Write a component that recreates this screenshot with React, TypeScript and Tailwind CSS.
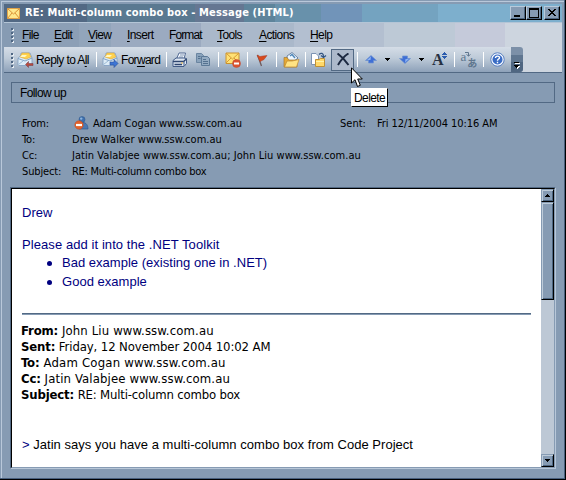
import React from "react";

const Sep = () => <span className="h-[15px] w-px shrink-0 bg-white" />;

const Grip = () => (
  <div className="flex w-[3px] shrink-0 flex-col gap-[2px]">
    {[0, 1, 2, 3].map((i) => (
      <span key={i} className="h-[2px] w-[2px] bg-[#4f6784] shadow-[1px_1px_0_#e8eef4]" />
    ))}
  </div>
);

const Mail = ({ arrow }: { arrow: "reply" | "forward" }) => (
  <svg width="17" height="16" viewBox="0 0 17 16" className="shrink-0">
    <path d="M1 6.500L4 3V1H13L15 6V12L13 13.500H2L1 12.500Z" fill="#dcebf6" stroke="#7d9cc0" strokeWidth=".8" />
    <path d="M5 1H12L14 5L9 7L3 5Z" fill="#ffd24d" stroke="#d9a43e" strokeWidth=".6" />
    <path d="M5 3H10L8 5H3Z" fill="#fff7c4" />
    <path d="M1 6.500L8 9L15 6" stroke="#6c93bd" fill="none" strokeWidth=".8" />
    <path d="M1.500 12.500L6 9" stroke="#8badcc" fill="none" strokeWidth=".8" />
    {arrow === "reply" ? (
      <path d="M8.500 12.500L11.500 9.500V11.500H16V13.500H11.500V15.500Z" fill="#b94b3c" stroke="#7d4450" strokeWidth=".6" />
    ) : (
      <path d="M16 11.500L12 7.500V10H8V13H12V15.500Z" fill="#3d75d4" stroke="#2b4f94" strokeWidth=".6" />
    )}
  </svg>
);

const Printer = () => (
  <svg width="16" height="16" viewBox="0 0 16 16">
    <path d="M4.500 7L7 1H13.500L12 7Z" fill="#f6faff" stroke="#536b93" />
    <path d="M8 3H12M7 5H11" stroke="#8097b4" />
    <path d="M1 8.500L4 6H12L14.500 6.500V11.500L12 14.500H1Z" fill="#dce6f2" stroke="#435c88" />
    <path d="M1 9.500H11.500L14.500 7" stroke="#2f466f" strokeWidth="1.300" fill="none" />
    <path d="M2.500 12.500H10" stroke="#2f466f" strokeWidth="1.300" />
    <path d="M12 9V14" stroke="#435c88" />
    <path d="M9 11H11" stroke="#f2bb49" />
  </svg>
);

const Copy = () => (
  <svg width="16" height="16" viewBox="0 0 16 16">
    <path d="M1.500 1.500H6.500L8.500 3.500V10.500H1.500Z" fill="#8aa3bc" stroke="#6a85a1" />
    <path d="M6.500 4.500H12.500L14.500 6.500V13.500H6.500Z" fill="#94abc2" stroke="#5c7997" />
    <path d="M3 4.500H5.500M3 6.500H5.500M8 7.500H11M8 9.500H13M8 11.500H13" stroke="#54718f" />
  </svg>
);

const Block = () => (
  <svg width="16" height="16" viewBox="0 0 16 16">
    <path d="M1 1H14V11.500H1Z" fill="#ffe174" stroke="#cc922d" />
    <path d="M1 1L7.500 7L14 1M1 11L6 6M14 11L9 6" fill="none" stroke="#d69b35" />
    <circle cx="11.500" cy="11.500" r="4" fill="#dc5430" stroke="#b84a35" strokeWidth=".5" />
    <path d="M9 11.500H14" stroke="#fff" strokeWidth="2" />
  </svg>
);

const Flag = () => (
  <svg width="13" height="14" viewBox="0 0 13 14">
    <path d="M1.500 2L5.500 13" stroke="#6f5a5c" strokeWidth="1.300" />
    <path d="M1 2L4 3.500L7 3L11 2.500L8 6.500L4 8.500Z" fill="#d84a1d" stroke="#a83c28" strokeWidth=".5" />
  </svg>
);

const Folder = () => (
  <svg width="17" height="16" viewBox="0 0 17 16">
    <path d="M4 4L9 0.500L15 6L10 10H5Z" fill="#eef7ff" stroke="#536d91" strokeWidth=".8" />
    <path d="M7 4L9 2.500L12 6" stroke="#4d86b8" fill="none" strokeWidth="1.400" />
    <path d="M1 5.500H4L6 8H14V15H1Z" fill="#e6aa35" stroke="#a77a32" strokeWidth=".7" />
    <path d="M1.500 15L4 9H9L16 7.500L13.500 15Z" fill="#ffe383" stroke="#bd8830" strokeWidth=".7" />
  </svg>
);

const Move = () => (
  <svg width="17" height="16" viewBox="0 0 17 16">
    <path d="M1.500 1.500H6L8.500 4V12.500H1.500Z" fill="#fff" stroke="#7d94b3" />
    <path d="M5.500 7.500H9L10.500 6.500H14.500V14.500H5.500Z" fill="#ffd868" stroke="#bd9037" />
    <path d="M6 9.500H14" stroke="#fff3a7" />
    <path d="M9 2.500C11 .5 13.500 1 13.500 4.500M11 3.500L13.500 5.500L16 3.500" fill="none" stroke="#315482" strokeWidth="1.200" />
  </svg>
);

const Cross = () => (
  <svg width="14" height="13" viewBox="0 0 14 13">
    <path d="M1.500 .5C5 3 9 7 12.500 12M12.500 .5C8 3 5 7 2 12" fill="none" stroke="#1d2941" strokeWidth="2" />
  </svg>
);

const Arrow = ({ down = false }: { down?: boolean }) => (
  <svg width="12" height="9" viewBox="0 0 12 9" className={down ? "rotate-180" : ""}>
    <path d="M6 .5L11.500 5.500H8.500V8H3.500V5.500H.5Z" fill="#3f6fd6" stroke="#6f93d0" strokeWidth=".7" />
    <path d="M6 1.500L2 5H5.500Z" fill="#8db3f2" />
  </svg>
);

const Drop = () => (
  <svg width="5" height="3" viewBox="0 0 5 3" shapeRendering="crispEdges">
    <path d="M0 0H5V1H4V2H3V3H2V2H1V1H0Z" />
  </svg>
);

const FontSize = () => (
  <span className="flex h-[15px] w-[16px] items-end">
    <span className="font-['Liberation_Serif',serif] text-[16px] leading-[14px] font-bold text-[#273142]">A</span>
    <svg width="5" height="8" viewBox="0 0 5 8" className="-ml-[2px] shrink-0 self-start" shapeRendering="crispEdges">
      <path d="M2 0H3V1H4V2H5V3H0V2H1V1H2ZM0 4H5V5H4V6H3V7H2V6H1V5H0Z" fill="#2c5cae" />
    </svg>
  </span>
);

const Translate = () => (
  <span className="flex h-[17px] w-[17px] text-[#60778f]">
    <span className="font-['Liberation_Serif',serif] text-[13px] leading-[12px]">a</span>
    <svg width="6" height="6" viewBox="0 0 6 6" className="-ml-px shrink-0">
      <path d="M0 1.500H3.500V5M1.500 3.500L3.500 5L5.500 3.500" fill="none" stroke="#60778f" />
    </svg>
    <span className="-ml-[4px] self-end font-['Noto_Sans_CJK_JP',sans-serif] text-[10px] leading-[10px] font-bold">あ</span>
  </span>
);

const Help = () => (
  <svg width="15" height="15" viewBox="0 0 15 15" className="shrink-0">
    <circle cx="7.500" cy="7.500" r="6.700" fill="#f5f9ff" stroke="#4a74bc" strokeWidth=".9" />
    <circle cx="7.500" cy="7.500" r="5" fill="#3a6cc4" />
    <path d="M5.500 6C5.500 3.500 9.500 3.500 9.500 5.700C9.500 7 7.500 7 7.500 8.700M7.500 9.800V11.300" fill="none" stroke="#fff" strokeWidth="1.400" />
  </svg>
);

const Person = () => (
  <svg width="15" height="14" viewBox="0 0 15 14" className="-mt-[2px] shrink-0">
    <path d="M4 12C4 8 6 6.500 9 6.500C12 6.500 14 9 14 13H5Z" fill="#4a78b2" stroke="#2c5489" strokeWidth=".6" />
    <circle cx="8" cy="3.500" r="3" fill="#3f70ad" stroke="#2c5489" strokeWidth=".5" />
    <circle cx="7.200" cy="2.600" r="1.200" fill="#8db4dc" />
    <circle cx="5" cy="9" r="4.200" fill="#e4632c" stroke="#c04a22" strokeWidth=".5" />
    <path d="M2 9H8" stroke="#fff" strokeWidth="2.200" />
  </svg>
);

const WinButton = ({ d }: { d: string }) => (
  <span className="flex h-[14px] w-[16px] items-center justify-center border border-t-[#b8cadb] border-r-black border-b-black border-l-[#b8cadb] bg-[#869bb3] shadow-[inset_-1px_-1px_0_#4c6581]">
    <svg width="10" height="10" viewBox="0 0 10 10" shapeRendering="crispEdges">
      <path d={d} fillRule="evenodd" />
    </svg>
  </span>
);

const ScrollButton = ({ down = false }: { down?: boolean }) => (
  <span className="flex h-[13px] w-[13px] shrink-0 items-center justify-center border border-t-[#869bb3] border-r-black border-b-black border-l-[#869bb3] bg-[#869bb3] shadow-[inset_1px_1px_0_#bdcbd9,inset_-1px_-1px_0_#4c6581]">
    <svg width="5" height="3" viewBox="0 0 5 3" shapeRendering="crispEdges" className={down ? "" : "rotate-180"}>
      <path d="M0 0H5V1H4V2H3V3H2V2H1V1H0Z" />
    </svg>
  </span>
);

const menu = [
  { pre: "", k: "F", rest: "ile", w: "w-[32px]" },
  { pre: "", k: "E", rest: "dit", w: "w-[34px]" },
  { pre: "", k: "V", rest: "iew", w: "w-[39px]" },
  { pre: "", k: "I", rest: "nsert", w: "w-[42px]" },
  { pre: "F", k: "o", rest: "rmat", w: "w-[48px] tracking-[-0.9px]" },
  { pre: "", k: "T", rest: "ools", w: "w-[42px]" },
  { pre: "", k: "A", rest: "ctions", w: "w-[51px]" },
  { pre: "", k: "H", rest: "elp", w: "w-[30px]" },
];

const headers = [
  { label: "From:", value: "Adam Cogan www.ssw.com.au", sent: "Fri 12/11/2004 10:16 AM", t: "tracking-[-0.04px]" },
  { label: "To:", value: "Drew Walker www.ssw.com.au", t: "tracking-[0.04px]" },
  { label: "Cc:", value: "Jatin Valabjee www.ssw.com.au; John Liu www.ssw.com.au", t: "tracking-[0.05px]" },
  { label: "Subject:", value: "RE: Multi-column combo box", t: "tracking-[-0.27px]" },
];

const quoted = [
  { label: "From:", value: "John Liu www.ssw.com.au", t: "tracking-[0.13px]" },
  { label: "Sent:", value: "Friday, 12 November 2004 10:02 AM", t: "tracking-[-0.1px]" },
  { label: "To:", value: "Adam Cogan www.ssw.com.au", t: "tracking-[0.2px]" },
  { label: "Cc:", value: "Jatin Valabjee www.ssw.com.au", t: "tracking-[0.13px]" },
  { label: "Subject:", value: "RE: Multi-column combo box", t: "tracking-[-0.18px]" },
];

export default function App() {
  return (
    <div className="relative flex h-[480px] w-[566px] flex-col overflow-hidden bg-[#869bb3] px-[4px] pt-[4px] font-['Liberation_Sans',sans-serif] whitespace-nowrap text-black shadow-[inset_-1px_-1px_0_#000,inset_-2px_-2px_0_#485f7d,inset_1px_1px_0_#869bb3,inset_2px_2px_0_#b9c8da]">
      <header className="flex h-[18px] w-[558px] shrink-0 items-center bg-[linear-gradient(90deg,#526984_83px,#5a7991_83px_191px,#657792_191px_240px,#5e849b_240px_271px,#6891ab_271px_317px,#7194b9_317px_358px,#74a3c0_358px_434px,#7dafcd_434px)] pr-[2px] pl-[3px]">
        <svg width="13" height="11" viewBox="0 0 13 11">
          <path d="M.5 .5H12.500V10.500H.5Z" fill="#ffe88c" stroke="#e0a24a" />
          <path d="M.5 .5L6.500 6L12.500 .5M.5 10.500L5 5M12.500 10.500L8 5" fill="none" stroke="#d99336" />
        </svg>
        <span className="ml-[5px] font-['DejaVu_Sans_Condensed','DejaVu_Sans',sans-serif] text-[11px] leading-[16px] font-bold tracking-[0.15px] text-white">RE: Multi-column combo box - Message (HTML)</span>
        <span className="ml-auto flex">
          <WinButton d="M1 7H7V9H1Z" />
          <WinButton d="M0 0H10V10H0ZM1 2V9H9V2Z" />
          <span className="w-[2px]" />
          <WinButton d="M1 1H3V2H4V3H6V2H7V1H9V2H8V3H7V4H6V5H7V6H8V7H9V8H7V7H6V6H4V7H3V8H1V7H2V6H3V5H4V4H3V3H2V2H1Z" />
        </span>
      </header>
      <div className="flex h-[51px] w-[558px] shrink-0 flex-col border-t border-b border-t-[#b4c5d6] border-b-[#526984] bg-[linear-gradient(90deg,#869bb3_36px,#8c9fb6_36px_75px,#92a5bb_75px_107px,#9baac0_107px_197px,#aab8ca_197px_290px,#b3bfd0_290px_380px,#bdc9d6_380px_451px,#c5cada_451px_501px,#cdd5df_501px)]">
        <nav className="flex h-[24px] shrink-0 items-center pl-[7px] text-[12px] leading-[16px] tracking-[-0.6px]">
          <Grip />
          <div className="ml-[8px] flex">
            {menu.map((m) => (
              <span key={m.k} className={m.w}>
                {m.pre}<u className="underline-offset-2">{m.k}</u>{m.rest}
              </span>
            ))}
          </div>
        </nav>
        <div className="flex h-[25px] w-[519px] shrink-0 items-center overflow-hidden rounded-r-[3px] bg-[linear-gradient(#d5dde7,#bdcad8_45%,#8da1b9)]">
          <div className="flex w-[507px] items-center pl-[7px] text-[12px] leading-[16px]">
            <Grip />
            <span className="ml-[3px] flex w-[79px] shrink-0 items-center gap-[2px] tracking-[-0.6px]"><Mail arrow="reply" /><span>Reply to A<u className="underline-offset-2">l</u>l</span></span>
            <Sep />
            <span className="ml-[5px] flex w-[64px] shrink-0 items-center gap-[2px] tracking-[-0.7px]"><Mail arrow="forward" /><span>For<u className="underline-offset-2">w</u>ard</span></span>
            <Sep />
            <span className="flex w-[51px] shrink-0 items-center gap-[7px] pl-[5px]"><Printer /><Copy /></span>
            <Sep />
            <span className="flex w-[28px] shrink-0 justify-center"><Block /></span>
            <Sep />
            <span className="flex w-[28px] shrink-0 justify-center"><Flag /></span>
            <Sep />
            <span className="flex w-[28px] shrink-0 justify-center"><Folder /></span>
            <Sep />
            <span className="flex w-[25px] shrink-0 justify-center"><Move /></span>
            <span className="flex h-[22px] w-[23px] shrink-0 items-center justify-center border border-[#526984] bg-[#adb9cb]"><Cross /></span>
            <span className="w-[3px] shrink-0" />
            <Sep />
            <span className="flex shrink-0 items-center pl-[7px]">
              <Arrow /><span className="ml-[8px]"><Drop /></span>
              <span className="ml-[9px]"><Arrow down /></span><span className="ml-[8px]"><Drop /></span>
              <span className="ml-[8px]"><FontSize /></span>
            </span>
            <span className="w-[6px] shrink-0" />
            <Sep />
            <span className="flex w-[28px] shrink-0 justify-center"><Translate /></span>
            <Sep />
            <span className="ml-[6px] flex"><Help /></span>
          </div>
          <div className="flex h-full w-[12px] items-end justify-center bg-[linear-gradient(#7c90a8_8px,#5f7690_8px_15px,#4f6681_15px)] pb-[3px]">
            <svg width="6" height="7" viewBox="0 0 6 7" shapeRendering="crispEdges">
              <path d="M1 1H6V2H1ZM1 4H6V5H5V6H4V7H3V6H2V5H1Z" fill="#fff" />
              <path d="M0 0H5V1H0ZM0 3H5V4H4V5H3V6H2V5H1V4H0Z" />
            </svg>
          </div>
        </div>
      </div>
      <div className="mx-[7px] mt-[9px] flex h-[21px] shrink-0 items-center border border-[#526984] pl-[8px] text-[12px] leading-[16px] tracking-[-0.6px]">Follow up</div>
      <section className="mt-[13px] flex h-[64px] shrink-0 flex-col pl-[18px] font-['DejaVu_Sans_Condensed','DejaVu_Sans',sans-serif] text-[11px] leading-[16px]">
        {headers.map((h) => (
          <div key={h.label} className="flex h-[16px] items-center">
            <span className="w-[50px] shrink-0 tracking-[-0.15px]">{h.label}</span>
            {h.sent ? (
              <>
                <span className="flex w-[268px] shrink-0 items-center gap-[4px] pl-[2px]"><Person /><span className={h.t}>{h.value}</span></span>
                <span className="w-[37px] shrink-0">Sent:</span>
                <span className="tracking-[-0.07px]">{h.sent}</span>
              </>
            ) : (
              <span className={h.t}>{h.value}</span>
            )}
          </div>
        ))}
      </section>
      <main className="ml-[6px] mt-[7px] flex h-[282px] w-[546px] shrink-0 border border-t-[#526984] border-r-[#b8c7d8] border-b-[#b8c7d8] border-l-[#526984]">
        <div className="flex w-full border border-t-black border-r-[#869bb3] border-b-[#869bb3] border-l-black bg-white">
          <article className="flex-1 pt-[16px] pl-[10px] text-[13px] leading-[16px]">
            <div className="text-[#000080]">
              <p>Drew</p>
              <p className="mt-[16px] tracking-[0.08px]">Please add it into the .NET Toolkit</p>
              <ul className="mt-[2px] flex flex-col gap-[3px] pl-[25px]">
                {["Bad example (existing one in .NET)", "Good example"].map((t) => (
                  <li key={t} className="flex items-center gap-[10px] tracking-[0.02px]">
                    <span className="h-[5px] w-[5px] rounded-full bg-[#000080]" />
                    {t}
                  </li>
                ))}
              </ul>
            </div>
            <hr className="mt-[23px] mr-[10px] h-[2px] border-t border-b border-t-[#526984] border-b-[#869bb3]" />
            <div className="mt-[8px] -ml-px font-['DejaVu_Sans_Condensed','DejaVu_Sans',sans-serif] text-[13px]">
              {quoted.map((q) => (
                <p key={q.label} className={q.t}><b className="tracking-[-0.15px]">{q.label}</b> {q.value}</p>
              ))}
            </div>
            <p className="mt-[34px] tracking-[0.03px]"><span className="text-[#000080]">&gt;</span> Jatin says you have a multi-column combo box from Code Project</p>
          </article>
          <aside className="flex w-[13px] flex-col bg-[#bdc8d5]">
            <ScrollButton />
            <span className="h-[98px] border border-t-[#869bb3] border-r-black border-b-black border-l-[#869bb3] bg-[#869bb3] shadow-[inset_1px_1px_0_#bdcbd9,inset_-1px_-1px_0_#4c6581]" />
            <span className="flex-1" />
            <ScrollButton down />
          </aside>
        </div>
      </main>
      <div className="absolute top-[88px] left-[351px] flex h-[19px] w-[37px] items-center border border-t-white border-r-black border-b-black border-l-white bg-white pl-[2px] text-[12px] leading-[16px] tracking-[-0.6px]">Delete</div>
      <svg width="12" height="21" viewBox="0 0 12 21" className="absolute top-[67px] left-[351px]">
        <path d="M.5 .8V16L4 12.700L6.500 19.500L9.300 18.300L6.700 12H11.300Z" fill="#fff" stroke="#000" />
      </svg>
    </div>
  );
}
